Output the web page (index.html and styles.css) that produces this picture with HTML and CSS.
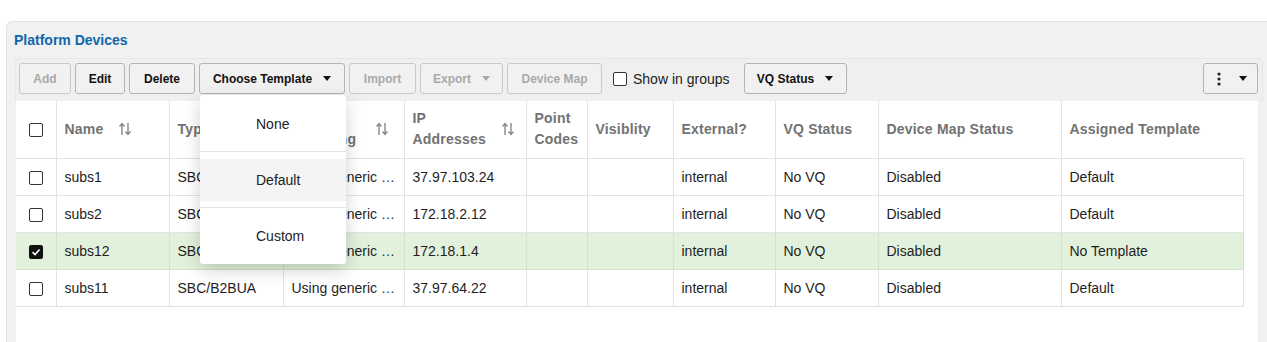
FILE: index.html
```html
<!DOCTYPE html>
<html lang="en">

<head>
    <meta charset="UTF-8">
    <meta name="viewport" content="width=device-width, initial-scale=1.0">
    <title>Platform Devices</title>
    <link rel="stylesheet" href="styles.css">
</head>

<body>
    <div class="panel">
        <h2 class="panel-title">Platform Devices</h2>

        <!-- Toolbar -->
        <div class="toolbar">
            <button class="btn w-add" disabled>Add</button>
            <button class="btn w-edit">Edit</button>
            <button class="btn w-delete">Delete</button>
            <div class="menu-wrap">
                <button class="btn btn-drop w-template">Choose Template <span class="caret"></span></button>
                <ul class="menu">
                    <li>None</li>
                    <li class="divider"></li>
                    <li class="active">Default</li>
                    <li class="divider"></li>
                    <li>Custom</li>
                </ul>
            </div>
            <button class="btn w-import" disabled>Import</button>
            <button class="btn btn-drop w-export" disabled>Export <span class="caret"></span></button>
            <button class="btn w-map" disabled>Device Map</button>
            <label class="groups"><span class="check"></span>Show in groups</label>
            <button class="btn btn-drop w-vq">VQ Status <span class="caret"></span></button>
            <button class="btn kebab">
                <svg width="4" height="14" viewBox="0 0 4 14">
                    <circle cx="2" cy="2" r="1.6" fill="#222" />
                    <circle cx="2" cy="7" r="1.6" fill="#222" />
                    <circle cx="2" cy="12" r="1.6" fill="#222" />
                </svg>
                <span class="caret"></span>
            </button>
        </div>

        <!-- Device table -->
        <div class="grid-wrap">
            <table class="grid">
                <colgroup>
                    <col class="c-check">
                    <col class="c-name">
                    <col class="c-type">
                    <col class="c-config">
                    <col class="c-ip">
                    <col class="c-point">
                    <col class="c-vis">
                    <col class="c-ext">
                    <col class="c-vq">
                    <col class="c-map">
                    <col class="c-tpl">
                </colgroup>
                <thead>
                    <tr>
                        <th class="cb"><span class="check"></span></th>
                        <th><div class="th-sort">Name <svg class="sort" width="12" height="14" viewBox="0 0 12 14"><path d="M3 13V2M0.5 4.5L3 1.5L5.5 4.5M9 1v11M6.5 9.5L9 12.5L11.5 9.5" fill="none" stroke="#8a8a8a" stroke-width="1.4"/></svg></div></th>
                        <th>Type</th>
                        <th><div class="th-sort"><span>Config<br>Signaling</span> <svg class="sort sort-far" width="12" height="14" viewBox="0 0 12 14"><path d="M3 13V2M0.5 4.5L3 1.5L5.5 4.5M9 1v11M6.5 9.5L9 12.5L11.5 9.5" fill="none" stroke="#8a8a8a" stroke-width="1.4"/></svg></div></th>
                        <th><div class="th-sort"><span>IP<br>Addresses</span> <svg class="sort" width="12" height="14" viewBox="0 0 12 14"><path d="M3 13V2M0.5 4.5L3 1.5L5.5 4.5M9 1v11M6.5 9.5L9 12.5L11.5 9.5" fill="none" stroke="#8a8a8a" stroke-width="1.4"/></svg></div></th>
                        <th>Point<br>Codes</th>
                        <th>Visiblity</th>
                        <th>External?</th>
                        <th>VQ Status</th>
                        <th>Device Map Status</th>
                        <th>Assigned Template</th>
                    </tr>
                </thead>
                <tbody>
                    <tr>
                        <td class="cb"><span class="check"></span></td>
                        <td>subs1</td>
                        <td>SBC/B2BUA</td>
                        <td class="clip">Using generic …</td>
                        <td>37.97.103.24</td>
                        <td></td>
                        <td></td>
                        <td>internal</td>
                        <td>No VQ</td>
                        <td>Disabled</td>
                        <td>Default</td>
                    </tr>
                    <tr>
                        <td class="cb"><span class="check"></span></td>
                        <td>subs2</td>
                        <td>SBC/B2BUA</td>
                        <td class="clip">Using generic …</td>
                        <td>172.18.2.12</td>
                        <td></td>
                        <td></td>
                        <td>internal</td>
                        <td>No VQ</td>
                        <td>Disabled</td>
                        <td>Default</td>
                    </tr>
                    <tr class="selected">
                        <td class="cb"><span class="check checked"><svg width="10" height="8" viewBox="0 0 10 8"><path d="M1.5 4.2L4 6.5L8.5 1.5" fill="none" stroke="#fff" stroke-width="1.6"/></svg></span></td>
                        <td>subs12</td>
                        <td>SBC/B2BUA</td>
                        <td class="clip">Using generic …</td>
                        <td>172.18.1.4</td>
                        <td></td>
                        <td></td>
                        <td>internal</td>
                        <td>No VQ</td>
                        <td>Disabled</td>
                        <td>No Template</td>
                    </tr>
                    <tr>
                        <td class="cb"><span class="check"></span></td>
                        <td>subs11</td>
                        <td>SBC/B2BUA</td>
                        <td class="clip">Using generic …</td>
                        <td>37.97.64.22</td>
                        <td></td>
                        <td></td>
                        <td>internal</td>
                        <td>No VQ</td>
                        <td>Disabled</td>
                        <td>Default</td>
                    </tr>
                </tbody>
            </table>
        </div>
    </div>
</body>

</html>
```

FILE: styles.css
```css
body {
    font-family: 'Liberation Sans', Arial, sans-serif;
    background-color: #fff;
    color: #222;
    margin: 0;
    overflow: hidden;
    height: 342px;
}

.panel {
    margin: 21px 0 0 6px;
    width: 1300px;
    height: 321px;
    background-color: #f1f1f1;
    border: 1px solid #e2e2e2;
    border-bottom: none;
    border-radius: 6px 0 0 0;
    padding: 8px 0 0 8px;
    box-sizing: border-box;
}

.panel-title {
    font-size: 14px;
    line-height: 20px;
    font-weight: bold;
    color: #0f67ab;
    margin: 0 0 8px -1px;
}

/* Toolbar */
.toolbar {
    display: flex;
    align-items: center;
    gap: 4px;
    width: 1248px;
    height: 43px;
    box-sizing: border-box;
    padding: 4px 4px 7px 3px;
    border: 1px solid #e6e6e6;
    border-bottom: none;
    border-radius: 5px 5px 0 0;
    background-color: #efefef;
}

.btn {
    font-family: inherit;
    font-size: 12px;
    font-weight: bold;
    color: #111;
    height: 31px;
    padding: 0;
    background-color: #f1f1f1;
    border: 1px solid #b4b4b4;
    border-radius: 3px;
    display: inline-flex;
    align-items: center;
    justify-content: center;
    box-sizing: border-box;
}

.btn:disabled {
    color: #a9a9a9;
    border-color: #c9c9c9;
}

.w-add { width: 52px; }
.w-edit { width: 50px; }
.w-delete { width: 66px; }
.w-template { width: 146px; }
.w-import { width: 67px; }
.w-export { width: 83px; }
.w-map { width: 95px; }
.w-vq { width: 103px; }

.btn-drop .caret {
    margin-left: 11px;
}

.caret {
    display: inline-block;
    width: 0;
    height: 0;
    border-left: 4px solid transparent;
    border-right: 4px solid transparent;
    border-top: 5px solid #111;
}

.btn:disabled .caret {
    border-top-color: #a9a9a9;
}

.menu-wrap {
    position: relative;
    display: flex;
}

.menu {
    position: absolute;
    top: 32px;
    left: 1px;
    width: 146px;
    margin: 0;
    padding: 8px 0 7px;
    list-style: none;
    background-color: #fff;
    border-radius: 3px;
    box-shadow: 0 6px 18px rgba(0, 0, 0, 0.18);
    z-index: 5;
    font-size: 14px;
}

.menu li {
    height: 42px;
    line-height: 42px;
    padding-left: 56px;
}

.menu li.active {
    background-color: #f4f4f4;
}

.menu li.divider {
    height: 1px;
    padding: 0;
    margin: 6px 0 7px;
    background-color: #e3e3e3;
}

.groups {
    display: flex;
    align-items: center;
    font-size: 14px;
    color: #222;
    margin-left: 7px;
    margin-right: 10px;
}

.groups .check {
    margin-right: 6px;
}

.kebab {
    margin-left: auto;
    width: 55px;
    padding: 0 0 0 2px;
}

.kebab .caret {
    margin-left: 18px;
}

/* Table */
.check {
    display: inline-flex;
    align-items: center;
    justify-content: center;
    width: 14px;
    height: 14px;
    box-sizing: border-box;
    border: 1.5px solid #333;
    border-radius: 2px;
    background-color: #fff;
    vertical-align: middle;
}

.check.checked {
    background-color: #111;
    border-color: #111;
}

.grid-wrap {
    margin-left: 1px;
    width: 1242px;
    height: 250px;
    background-color: #fff;
}

.grid {
    width: 1227px;
    table-layout: fixed;
    border-collapse: collapse;
    font-size: 14px;
}

.c-check { width: 40px; }
.c-name { width: 113px; }
.c-type { width: 114px; }
.c-config { width: 121px; }
.c-ip { width: 122px; }
.c-point { width: 61px; }
.c-vis { width: 86px; }
.c-ext { width: 102px; }
.c-vq { width: 103px; }
.c-map { width: 183px; }
.c-tpl { width: 182px; }

.grid th,
.grid td {
    border: 1px solid #e3e3e3;
    padding: 0 8px;
    text-align: left;
    vertical-align: middle;
}

.grid thead tr {
    height: 57px;
}

.grid thead th {
    border-top: none;
}

.grid th:first-child,
.grid td:first-child {
    border-left: none;
}

.grid thead th:last-child {
    border-right: none;
}

.grid th {
    font-weight: bold;
    color: #727272;
    line-height: 21px;
    letter-spacing: 0.2px;
}

.grid tbody tr {
    height: 37px;
}

.grid td {
    color: #1e1e1e;
}

.grid .cb {
    padding: 0 0 0 13px;
}

.grid tr.selected td {
    background-color: #e2f1dc;
    border-color: #d4e3cd;
}

.th-sort {
    display: flex;
    align-items: center;
}

.sort {
    flex: none;
    margin-left: 16px;
}

.sort-far {
    margin-left: 20px;
}

.clip {
    white-space: nowrap;
    overflow: hidden;
}
```
